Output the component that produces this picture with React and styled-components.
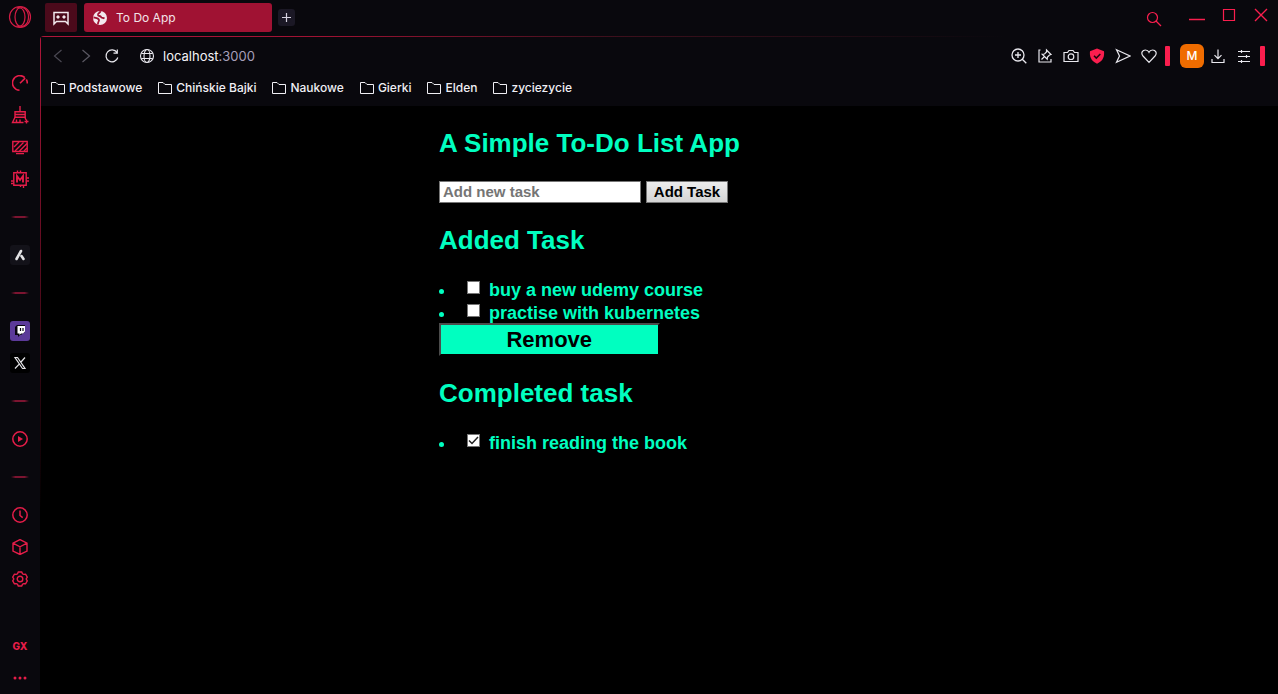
import React from "react";
import styled, { createGlobalStyle } from "styled-components";

const RED = "#fa1e4e";
const MINT = "#00ffc0";

const GlobalStyle = createGlobalStyle`
  *, *::before, *::after { box-sizing: border-box; }
  body { margin: 0; background: #000; }
  button { cursor: pointer; }
`;

const Browser = styled.div`
  display: grid;
  grid-template-columns: 40px minmax(0, 1fr);
  min-height: 100vh;
  background: #09080d;
  font-family: Inter, "Noto Sans", sans-serif;
`;

const Glyph = styled.svg`
  display: block;
  width: ${(p) => p.$size || 16}px;
  height: ${(p) => p.$size || 16}px;
  fill: none;
  stroke: currentColor;
  stroke-width: 1.2;
`;

const IconButton = styled.button`
  display: grid;
  place-items: center;
  flex: none;
  width: ${(p) => p.$width || 26}px;
  height: ${(p) => p.$height || 24}px;
  padding: 0;
  border: 0;
  background: none;
  color: ${(p) => p.$color || "#e9e8ee"};
`;

const Sidebar = styled.nav`
  display: flex;
  flex-direction: column;
  align-items: center;
`;

const Logo = styled.button`
  display: grid;
  place-items: center;
  width: 40px;
  height: 34px;
  padding: 0;
  margin-bottom: 33px;
  border: 0;
  background: none;
  color: #d41c45;
`;

const SideButton = styled.button`
  display: grid;
  place-items: center;
  flex: none;
  width: 40px;
  height: 32px;
  padding: 0;
  border: 0;
  background: none;
  color: #e61d49;
  font: 800 10px/12px Inter, sans-serif;
`;

const SideDivider = styled.hr`
  flex: none;
  width: 18px;
  height: 2px;
  margin: 21px 0;
  border: 0;
  background: linear-gradient(90deg, transparent, #7c1430 25%, #7c1430 75%, transparent);
`;

const SideTile = styled.span`
  display: grid;
  place-items: center;
  width: 20px;
  height: 20px;
  border-radius: 3px;
  color: #e4e4e6;
  background: ${(p) => p.$bg};
`;

const Spacer = styled.div`
  flex: 1;
`;

const Main = styled.div`
  display: flex;
  flex-direction: column;
  min-width: 0;
`;

const TabStrip = styled.header`
  display: flex;
  align-items: flex-start;
  height: 36px;
  padding: 3px 1px 0 5px;
`;

const PinnedTab = styled.button`
  display: grid;
  place-items: center;
  width: 32px;
  height: 29px;
  padding: 0;
  border: 0;
  border-radius: 2px;
  background: #4b0a1b;
  color: #f3e9ee;
`;

const Tab = styled.button`
  display: flex;
  align-items: center;
  gap: 8px;
  width: 188px;
  height: 29px;
  margin: 0 6px 0 7px;
  padding: 0 8px;
  border: 0;
  border-radius: 3px;
  background: #a01233;
  color: #f3e3e9;
  font: 400 12px/18px Inter, sans-serif;
`;

const NewTab = styled.button`
  display: grid;
  place-items: center;
  width: 17px;
  height: 17px;
  margin-top: 6px;
  padding: 0;
  border: 0;
  border-radius: 3px;
  background: #1b1825;
  color: #d5d1df;
`;

const WindowControls = styled.div`
  display: flex;
  align-items: flex-start;
`;

const Frame = styled.div`
  display: flex;
  flex: 1;
  flex-direction: column;
  padding: 1px 0 0 1px;
  border-top-left-radius: 4px;
  background:
    linear-gradient(90deg, #b0163a, #a01233 23%, #40101d 45%, #09080d 78%) top / 100% 1px no-repeat,
    linear-gradient(180deg, #b0163a, #000 72%) left / 1px 100% no-repeat,
    #09080d;
`;

const Chrome = styled.div`
  height: 69px;
  border-top-left-radius: 3px;
  background: #09080d;
`;

const AddressBar = styled.div`
  display: flex;
  align-items: center;
  height: 38px;
  padding: 0 13px 0 3px;
`;

const SiteInfo = styled(IconButton)`
  margin-left: 10px;
`;

const Address = styled.span`
  flex: 1;
  padding-left: 3px;
  color: #a69fb9;
  font-size: 13px;
  line-height: 20px;
`;

const Host = styled.span`
  color: #f4f3f7;
`;

const PinkBar = styled.span`
  width: 5px;
  height: 20px;
  margin: 0 ${(p) => p.$gap || 0}px 0 ${(p) => p.$before || 0}px;
  border-radius: 1px;
  background: ${RED};
`;

const Profile = styled.button`
  width: 24px;
  height: 24px;
  padding: 0;
  border: 0;
  border-radius: 6px;
  background: #ef6c00;
  color: #fff;
  font: 500 12px/24px Inter, sans-serif;
`;

const Bookmarks = styled.nav`
  display: flex;
  align-items: center;
  gap: 16px;
  height: 26px;
  padding-left: 10px;
`;

const Bookmark = styled.a`
  display: flex;
  align-items: center;
  gap: 4px;
  color: #f0eff4;
  font-size: 12px;
  font-weight: 500;
  line-height: 16px;
  text-decoration: none;
`;

const FolderIcon = styled.svg`
  width: 14px;
  height: 12px;
  fill: none;
  stroke: currentColor;
`;

const Page = styled.main`
  flex: 1;
  background: #000;
  color: ${MINT};
  font: 700 18px/23px "Liberation Sans", Arial, sans-serif;
`;

const TodoApp = styled.div`
  display: flow-root;
  width: 441px;
  max-width: 100%;
  margin: 0 auto;
`;

const Heading = styled.h2`
  margin: 22px 0 21px;
  font-size: 26px;
  line-height: 31px;
`;

const TaskForm = styled.form`
  display: flex;
  gap: 5px;
  padding-top: 1px;
`;

const TaskInput = styled.input`
  width: 202px;
  height: 22px;
  padding: 0 3px 2px;
  border: 1px solid #767676;
  border-radius: 0;
  background: #fff;
  color: #000;
  font: 700 15px/18px "Liberation Sans", Arial, sans-serif;
  &::placeholder { color: #757575; }
`;

const AddButton = styled.button`
  width: 82px;
  height: 22px;
  padding: 0;
  border: 1px solid #767676;
  background: linear-gradient(#ececec, #d4d4d4);
  color: #000;
  font: 700 15px/18px "Liberation Sans", Arial, sans-serif;
`;

const TaskList = styled.ul`
  margin: 0;
  padding: 0;
  list-style: none;
`;

const TaskRow = styled.li`
  display: flex;
  align-items: center;
  &::before {
    content: "";
    width: 5px;
    height: 5px;
    margin: 5px 23px 0 0;
    border-radius: 50%;
    background: ${MINT};
  }
`;

const TaskLabel = styled.label`
  display: flex;
  gap: 9px;
`;

const TaskText = styled.span`
  padding-top: 4px;
  line-height: 19px;
`;

const Check = styled.input`
  appearance: none;
  width: 13px;
  height: 13px;
  margin: 4px 0 0;
  border: 1px solid #767676;
  background: #fff;
  &:checked {
    background: #fff url("data:image/svg+xml,%3Csvg xmlns='http://www.w3.org/2000/svg' viewBox='0 0 11 11'%3E%3Cpath d='M1 5.500l3 3 6-6.500' fill='none' stroke='%23222' stroke-width='1.500'/%3E%3C/svg%3E");
  }
`;

const RemoveButton = styled.button`
  display: block;
  width: 50%;
  height: 33px;
  padding: 0;
  border: 2px solid;
  border-color: #4c4c4c #000 #000 #4c4c4c;
  background: ${MINT};
  color: #000;
  font: 700 22px/28px "Liberation Sans", Arial, sans-serif;
`;

const strokes = {
  gauge: (
    <g strokeWidth="1.600">
      <path d="M7.500 15.200A7.300 7.300 0 1 1 12.800 2.600M14.300 4.500A7.300 7.300 0 0 1 15.300 8.500" />
      <path d="M8 8.300l5.200-5.200" />
    </g>
  ),
  broom: (
    <g strokeWidth="1.400">
      <path d="M9 0v5.500M4 5.800h10.200v5.400H4zM4 8.500h10" />
      <path d="M4 11.200L1.500 16.500h11M14 11.200l.8 2.500M5.500 16v-2.500M9 16v-2.500M13.500 15.500h4M15.500 13.500v4" />
    </g>
  ),
  screen: (
    <g strokeWidth="1.400">
      <path d="M.8 2.500h14.400v10H.8zM4 14.600h8" />
      <path d="M2 8l5-5M3 12l8.500-8.500M7.500 12L15 4.500M12 12l3-3" />
    </g>
  ),
  chip: (
    <g strokeWidth="1.400">
      <path d="M2.800 2.800h12.400v12.400H2.800z" />
      <path d="M6 12.500V6l3 4 3-4v6.500" strokeWidth="1.900" />
      <path d="M6.500 2.500V.5M9.500 2.500V.5M0 11h2.500M0 13.500h2.500M15.500 8H18M15.500 11H18M9.500 15.500v1.500M12.500 15.500v2.500" />
    </g>
  ),
  player: (
    <g>
      <circle cx="8" cy="8" r="7.200" strokeWidth="1.500" />
      <path d="M6 5l5 3-5 3z" fill="currentColor" stroke="none" />
    </g>
  ),
  clock: <path d="M15.200 8A7.200 7.200 0 1 1 .8 8a7.200 7.200 0 0 1 14.400 0M8 3.500v5l2.700 2.200" strokeWidth="1.500" />,
  cube: <path d="M8 .6l7 3.500v8L8 15.500 1 12.100v-8zM1 4.200l7 3.600 7-3.600M8 7.800v7.600" strokeWidth="1.400" />,
  gear: (
    <g strokeWidth="1.400">
      <path d="M6.300 1h3.400l.8 1.800 1.100.6 2-.2 1.700 2.900L14.200 8l1.100 1.900-1.700 2.900-2-.2-1.100.6-.8 1.800H6.300l-.8-1.800-1.100-.6-2 .2L.7 9.900 1.800 8 .7 6.100l1.700-2.900 2 .2 1.100-.6z" />
      <circle cx="8" cy="8" r="2.800" />
    </g>
  ),
  dots: (
    <g fill="currentColor" stroke="none">
      <circle cx="3" cy="8" r="1.500" />
      <circle cx="8" cy="8" r="1.500" />
      <circle cx="13" cy="8" r="1.500" />
    </g>
  ),
  back: <path d="M11.500 2L4.500 8l7 6" />,
  forward: <path d="M4.500 2l7 6-7 6" />,
  reload: <path d="M13 4.500A6 6 0 1 0 13.800 9.500M13.300 1.500v3.700H9.500" />,
  globe: (
    <g strokeWidth="1.100">
      <circle cx="8" cy="8" r="6.500" />
      <ellipse cx="8" cy="8" rx="3" ry="6.500" />
      <path d="M2.300 5.500h11.400M2.300 10.500h11.400" />
    </g>
  ),
  zoomIn: <path d="M13 7A6 6 0 1 1 1 7a6 6 0 0 1 12 0M11.300 11.300l4 4M7 4v6M4 7h6" strokeWidth="1.300" />,
  pinPage: <path d="M3.500 2H2v12h12v-3M9.500 2l4.500 4.500-1.500.5-2 2-.3 2.200-5-5 2.300-.2 2-2zM7.500 8.500L4.500 11.500" />,
  camera: (
    <g>
      <path d="M1 4.500h3.500L6 2.500h4l1.500 2H15v9H1z" />
      <circle cx="8" cy="8.700" r="2.800" />
    </g>
  ),
  shield: (
    <g>
      <path d="M8 .5l7 2.800c.6 5-.8 9.700-7 12.500C1.800 13 .4 8.300 1 3.300z" fill={RED} stroke="none" />
      <path d="M5 7.800l2.300 2.300L11.300 6" stroke="#20060e" strokeWidth="1.500" />
    </g>
  ),
  send: <path d="M1.500 1.800L15 8 1.500 14.200 4.500 8z" />,
  heart: <path d="M8 14.300L2 8C-.5 5 1.500 2 4.400 2 6.200 2 7.500 3.200 8 4.300 8.500 3.200 9.800 2 11.600 2c2.900 0 4.900 3 2.400 6z" />,
  download: <path d="M8 1.500v9M4.500 7.200L8 10.700l3.500-3.500M2 11v3.500h12V11" />,
  tune: <path d="M2 3.500h12M2 8.500h12M2 13.500h12M5.500 2v3M10.500 7v3M5.500 12v3" />,
};

const Icon = ({ name, size, box = 16 }) => (
  <Glyph $size={size} viewBox={`0 0 ${box} ${box}`} aria-hidden="true">
    {strokes[name]}
  </Glyph>
);

const tools = [
  ["zoomIn", "Zoom"],
  ["pinPage", "Pinboard"],
  ["camera", "Snapshot"],
  ["shield", "Ad blocker"],
  ["send", "My Flow"],
  ["heart", "Favourites"],
];

const folders = ["Podstawowe", "Chińskie Bajki", "Naukowe", "Gierki", "Elden", "zyciezycie"];

const SideItem = ({ name, label, ...rest }) => (
  <SideButton aria-label={label}>
    <Icon name={name} {...rest} />
  </SideButton>
);

const Task = ({ text, done }) => (
  <TaskRow>
    <TaskLabel>
      <Check type="checkbox" defaultChecked={done} />
      <TaskText>{text}</TaskText>
    </TaskLabel>
  </TaskRow>
);

export default function App() {
  return (
    <>
      <GlobalStyle />
      <Browser>
        <Sidebar aria-label="Sidebar">
          <Logo aria-label="Menu">
            <Glyph $size={24} viewBox="0 0 24 24">
              <circle cx="12" cy="12" r="10.500" />
              <ellipse cx="12" cy="12" rx="5" ry="9" />
              <path d="M8.500 3.200C15 0 20.500 5 20.500 12S15 24 8.500 20.800" />
            </Glyph>
          </Logo>
          <SideItem name="gauge" label="GX Control" />
          <SideItem name="broom" label="GX Cleaner" size={18} box={18} />
          <SideItem name="screen" label="Wallpaper" />
          <SideItem name="chip" label="Mods" size={18} box={18} />
          <SideDivider />
          <SideButton aria-label="Aria">
            <SideTile $bg="#131219">
              <Glyph $size={14} viewBox="0 0 14 14">
                <path d="M8 3L3.500 11M8.500 8l2 3" strokeWidth="2.600" strokeLinecap="round" />
              </Glyph>
            </SideTile>
          </SideButton>
          <SideDivider />
          <SideButton aria-label="Twitch">
            <SideTile $bg="#5c3a99">
              <Glyph $size={14} viewBox="0 0 14 14">
                <path d="M2 3l2-2h8v7l-4 3H7l-2 2v-2H2z" fill="#08040f" stroke="none" />
                <path d="M4.500 2H12v5.500L10 9.500H8L6.500 11V9.500h-2z" fill="#fff" stroke="none" />
                <path d="M7.500 4v3M10 4v3" stroke="#08040f" />
              </Glyph>
            </SideTile>
          </SideButton>
          <SideButton aria-label="X">
            <SideTile $bg="#000">
              <Glyph $size={14} viewBox="0 0 14 14">
                <path d="M2 1.500h2.500l7.500 11H9.500zM12 1.500L8 6M6 8.300l-4 4.200" />
              </Glyph>
            </SideTile>
          </SideButton>
          <SideDivider />
          <SideItem name="player" label="Player" />
          <SideDivider />
          <SideItem name="clock" label="History" />
          <SideItem name="cube" label="Extensions" />
          <SideItem name="gear" label="Settings" />
          <Spacer />
          <SideButton>GX</SideButton>
          <SideItem name="dots" label="More" />
        </Sidebar>

        <Main>
          <TabStrip>
            <PinnedTab aria-label="GX Corner">
              <Glyph $size={18} viewBox="0 0 18 18">
                <path d="M2 3.500h14v11.500l-2.500-2.500h-9L2 15z" strokeWidth="1.500" />
                <path d="M6 6l2 2-2 2-2-2zM12 6l2 2-2 2-2-2z" fill="currentColor" stroke="none" />
              </Glyph>
            </PinnedTab>
            <Tab>
              <Glyph viewBox="0 0 16 16">
                <circle cx="8" cy="8" r="7" fill="#f3e9ee" stroke="none" />
                <path d="M8.500 1.200c-.2 2-2.800 1.800-2.500 3.800.3 1.500 2.300.5 3 2 .5 1.200 2 .5 3.500 1.500M1.500 7.500C4 8 6.500 8 7 10c.3 1.500-1.500 2-1 4.500" stroke="#a01233" strokeWidth="1.800" />
              </Glyph>
              To Do App
            </Tab>
            <NewTab aria-label="New tab">
              <Glyph $size={11} viewBox="0 0 11 11">
                <path d="M5.500 1v9M1 5.500h9" />
              </Glyph>
            </NewTab>
            <Spacer />
            <WindowControls>
              <IconButton aria-label="Search tabs" $width={54} $height={31} $color={RED}>
                <Glyph viewBox="0 0 16 16">
                  <circle cx="6.500" cy="6.500" r="5" />
                  <path d="M10 10l5 5" />
                </Glyph>
              </IconButton>
              <IconButton aria-label="Minimise" $width={32} $color={RED}>
                <Glyph viewBox="0 0 16 16">
                  <path d="M0 12.500h16" strokeWidth="1.500" />
                </Glyph>
              </IconButton>
              <IconButton aria-label="Maximise" $width={32} $color={RED}>
                <Glyph $size={14} viewBox="0 0 14 14">
                  <path d="M1.500 1.500h11v11h-11z" />
                </Glyph>
              </IconButton>
              <IconButton aria-label="Close" $width={32} $color={RED}>
                <Glyph $size={14} viewBox="0 0 14 14">
                  <path d="M1 1l12 12M13 1L1 13" strokeWidth="1.400" />
                </Glyph>
              </IconButton>
            </WindowControls>
          </TabStrip>

          <Frame>
            <Chrome>
              <AddressBar>
                <IconButton aria-label="Back" $width={28} $color="#4b4953"><Icon name="back" /></IconButton>
                <IconButton aria-label="Forward" $width={28} $color="#5b5963"><Icon name="forward" /></IconButton>
                <IconButton aria-label="Reload" $width={24}><Icon name="reload" /></IconButton>
                <SiteInfo aria-label="Site information"><Icon name="globe" /></SiteInfo>
                <Address><Host>localhost</Host>:3000</Address>
                {tools.map(([name, label]) => (
                  <IconButton key={name} aria-label={label}><Icon name={name} /></IconButton>
                ))}
                <PinkBar $before={3} $gap={10} />
                <Profile aria-label="Profile M">M</Profile>
                <IconButton aria-label="Downloads" $width={28}><Icon name="download" /></IconButton>
                <IconButton aria-label="Easy setup" $width={24}><Icon name="tune" /></IconButton>
                <PinkBar $before={4} />
              </AddressBar>
              <Bookmarks aria-label="Bookmarks">
                {folders.map((name) => (
                  <Bookmark key={name} href="#">
                    <FolderIcon viewBox="0 0 14 12" aria-hidden="true">
                      <path d="M.5.500h4.500l2 2h6.500v9H.5z" />
                    </FolderIcon>
                    {name}
                  </Bookmark>
                ))}
              </Bookmarks>
            </Chrome>

            <Page>
              <TodoApp>
                <Heading>A Simple To-Do List App</Heading>
                <TaskForm>
                  <TaskInput aria-label="New task" placeholder="Add new task" />
                  <AddButton type="button">Add Task</AddButton>
                </TaskForm>
                <Heading>Added Task</Heading>
                <TaskList>
                  <Task text="buy a new udemy course" />
                  <Task text="practise with kubernetes" />
                </TaskList>
                <RemoveButton>Remove</RemoveButton>
                <Heading>Completed task</Heading>
                <TaskList>
                  <Task text="finish reading the book" done />
                </TaskList>
              </TodoApp>
            </Page>
          </Frame>
        </Main>
      </Browser>
    </>
  );
}
